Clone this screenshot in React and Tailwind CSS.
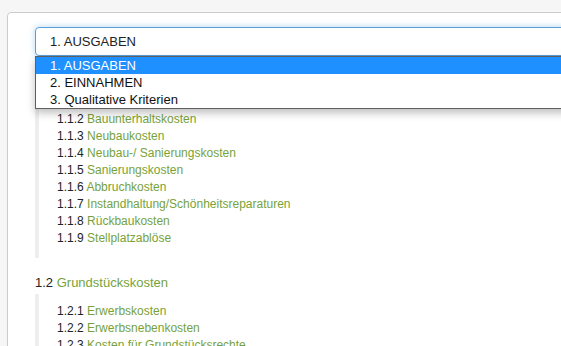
import React from "react";

const sections = [
  {
    nr: "1.1",
    title: "Baukosten",
    items: [
      ["1.1.1", "Baukosten"],
      ["1.1.2", "Bauunterhaltskosten"],
      ["1.1.3", "Neubaukosten"],
      ["1.1.4", "Neubau-/ Sanierungskosten"],
      ["1.1.5", "Sanierungskosten"],
      ["1.1.6", "Abbruchkosten"],
      ["1.1.7", "Instandhaltung/Schönheitsreparaturen"],
      ["1.1.8", "Rückbaukosten"],
      ["1.1.9", "Stellplatzablöse"],
    ],
  },
  {
    nr: "1.2",
    title: "Grundstückskosten",
    items: [
      ["1.2.1", "Erwerbskosten"],
      ["1.2.2", "Erwerbsnebenkosten"],
      ["1.2.3", "Kosten für Grundstücksrechte"],
      ["1.2.4", "Erschließungskosten"],
    ],
  },
];

const options = ["1. AUSGABEN", "2. EINNAHMEN", "3. Qualitative Kriterien"];

export default function App() {
  return (
    <div
      className="w-[561px] h-[346px] overflow-hidden bg-[#f6f6f6] pt-3 pl-[7px]"
      style={{ fontFamily: '"Liberation Sans", Arial, sans-serif' }}
    >
      <div className="w-[620px] h-[400px] bg-white border border-[#cccccc] rounded-[4px] pt-[14px] pl-[27px]">
        {/* select with open list */}
        <div className="relative w-[600px]">
          <div className="h-[29px] flex items-center pl-[14px] border border-[#5a9fd8] rounded-l-[4px] text-[13px] text-[#222] shadow-[0_0_6px_rgba(102,175,233,0.5)]">
            1. AUSGABEN
          </div>
          <div className="absolute z-10 top-full left-0 right-0 bg-white border border-[#5f5f5f] shadow-[0_4px_8px_rgba(0,0,0,0.25)] text-[13px]">
            {options.map((o, i) => (
              <div
                key={o}
                className={
                  i === 0
                    ? "h-[17px] leading-[17px] pl-[14px] bg-[#1e90ff] text-white"
                    : "h-[17px] leading-[17px] pl-[14px] text-[#111]"
                }
              >
                {o}
              </div>
            ))}
          </div>
        </div>

        {/* tree */}
        {sections.map((s, si) => (
          <div key={s.nr} className={si === 0 ? "mt-[8px]" : "mt-[15px]"}>
            <div className="h-[20px] leading-[20px] text-[13px] mb-px">
              <span className="text-[#222]">{s.nr} </span>
              <span className="text-[#77a23a]">{s.title}</span>
            </div>
            <ul className="border-l-4 border-[#eeeeee] pl-[18px] pt-[9px] pb-[11px]">
              {s.items.map(([n, t]) => (
                <li key={n} className="h-[17px] leading-[17px] text-[12px]">
                  <span className="text-[#222]">{n} </span>
                  <span className="text-[#77a23a]">{t}</span>
                </li>
              ))}
            </ul>
          </div>
        ))}
      </div>
    </div>
  );
}
